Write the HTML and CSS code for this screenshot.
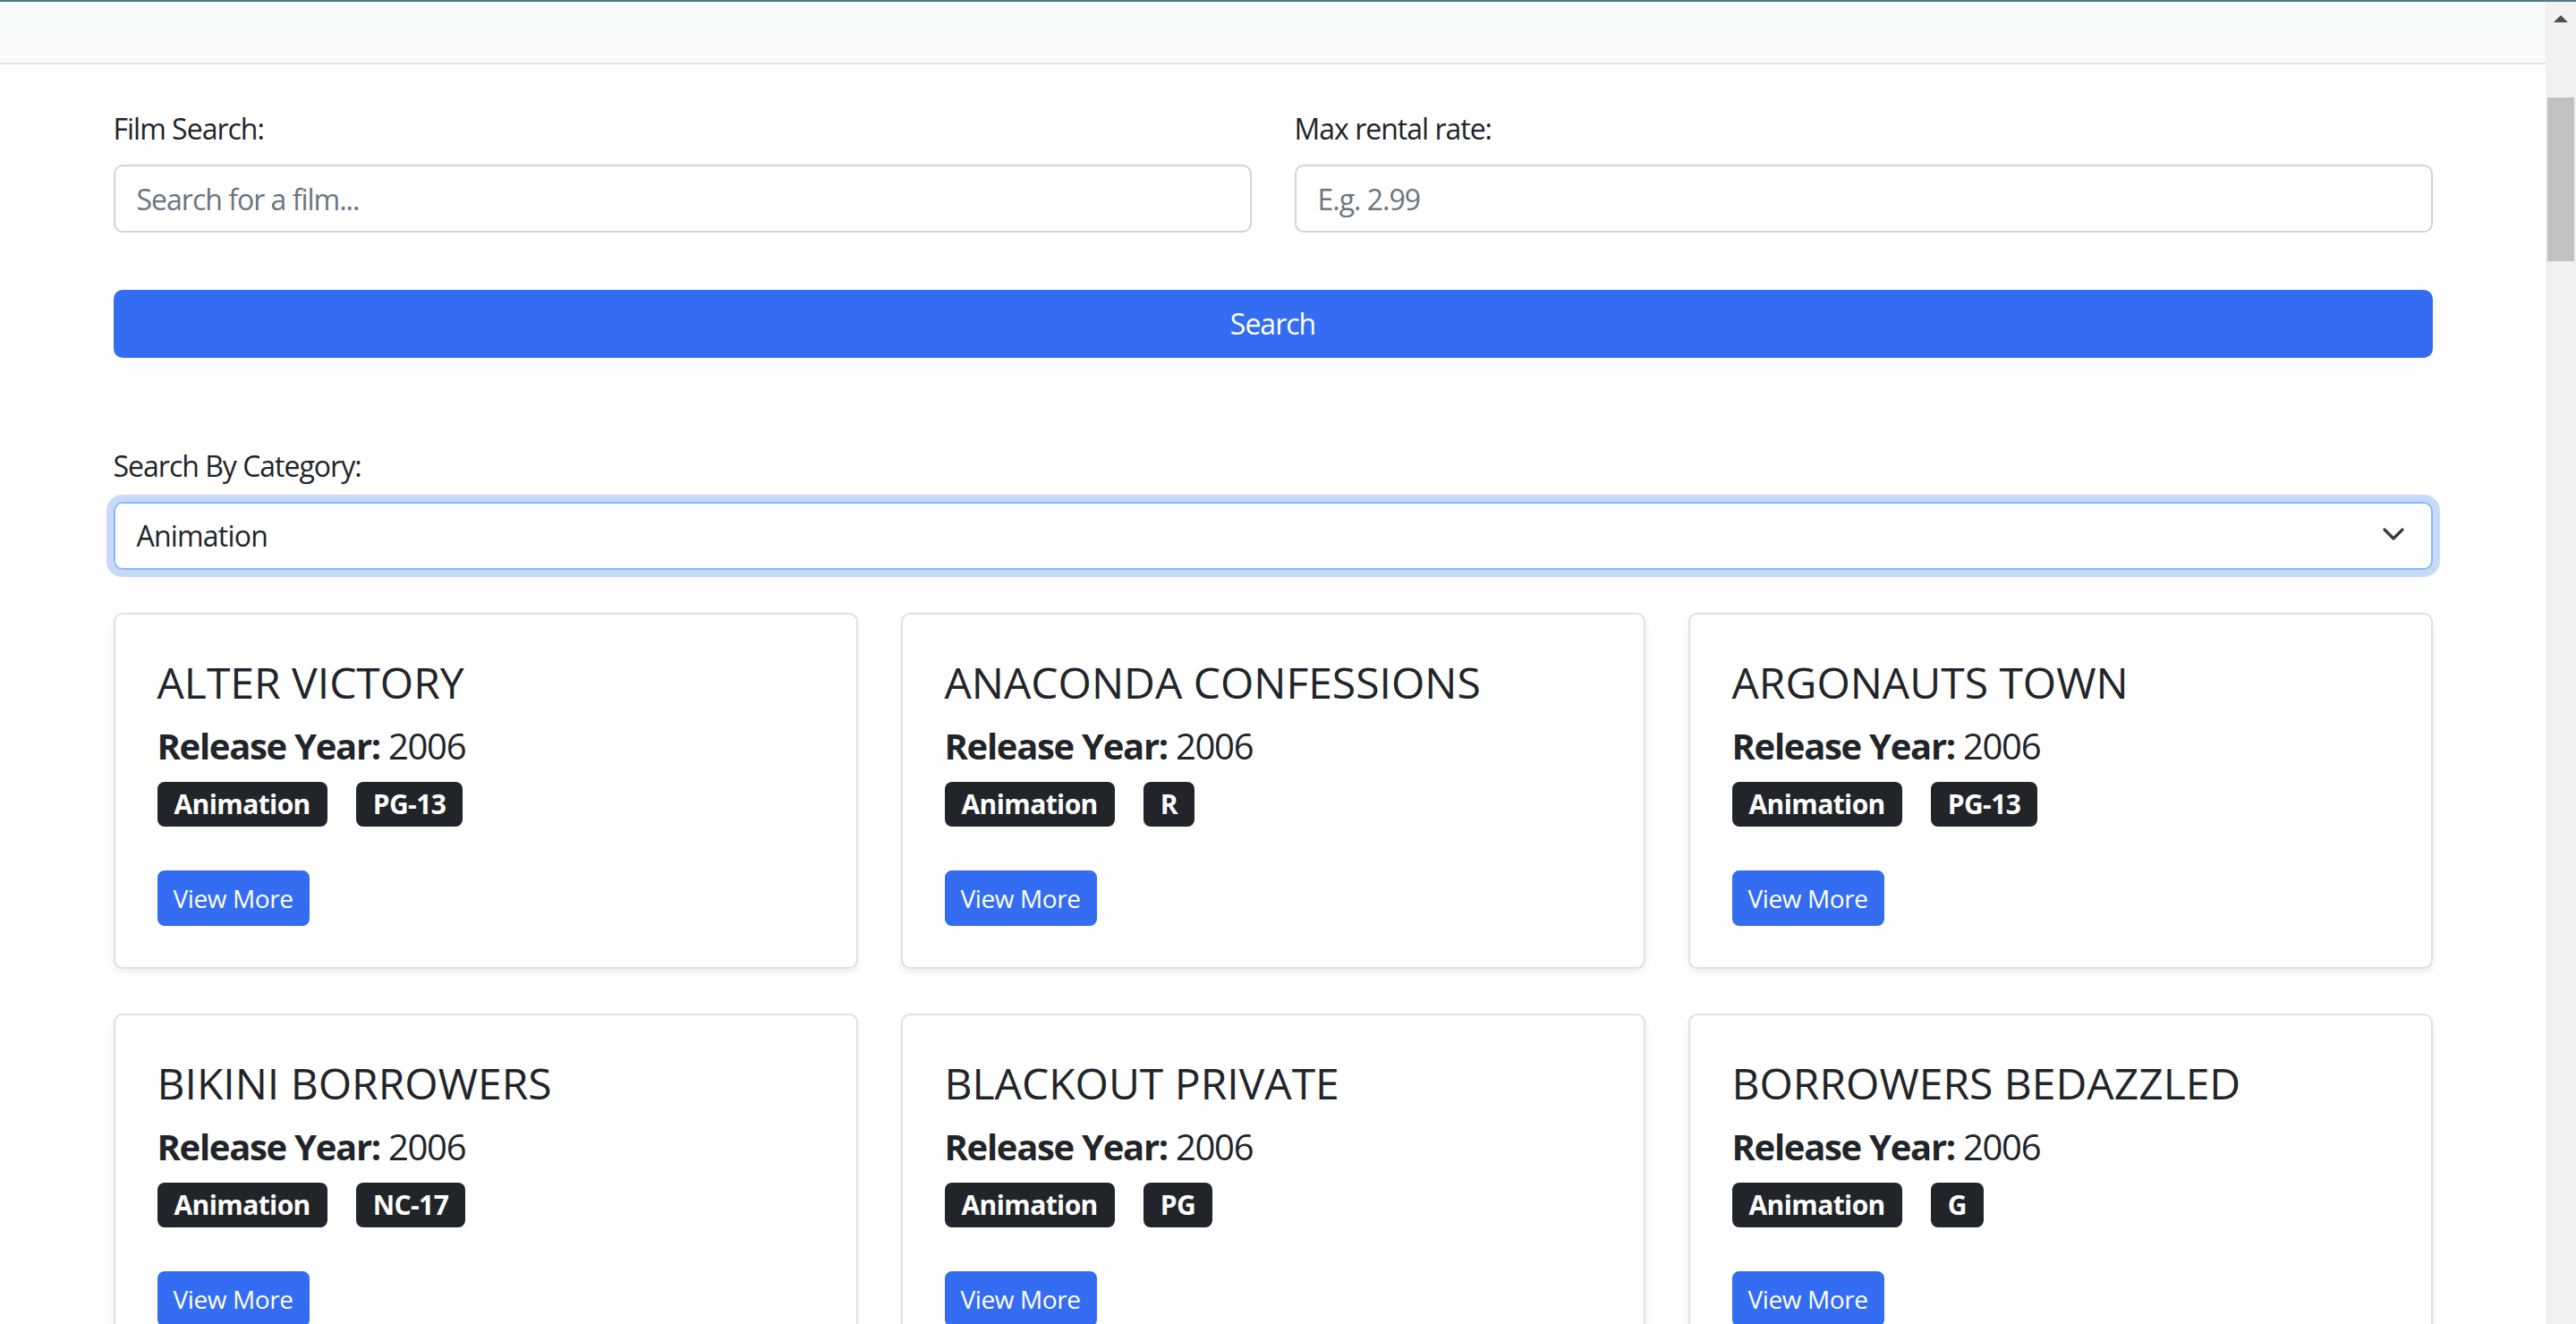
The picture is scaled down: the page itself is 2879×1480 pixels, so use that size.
FILE: index.html
```html
<!DOCTYPE html>
<html lang="en">
<head>
<meta charset="utf-8">
<title>Film Search</title>
<link rel="stylesheet" href="styles.css">
</head>
<body>
<div class="window-line"></div>
<div class="frame">
  <div class="page">
    <nav class="navbar"></nav>
    <main class="container">
      <div class="form-row">
        <div class="field">
          <label class="form-label" for="film">Film Search:</label>
          <input class="form-control" id="film" type="text" placeholder="Search for a film...">
        </div>
        <div class="field">
          <label class="form-label" for="rate">Max rental rate:</label>
          <input class="form-control" id="rate" type="text" placeholder="E.g. 2.99">
        </div>
      </div>
      <button class="btn btn-primary btn-block" type="button">Search</button>

      <div class="category">
        <div class="form-label">Search By Category:</div>
        <div class="form-select">
          <span>Animation</span>
          <svg class="chevron" width="24" height="14" viewBox="0 0 24 14"><polyline points="2,2 12,12 22,2" fill="none" stroke="#343a40" stroke-width="3.2" stroke-linecap="round" stroke-linejoin="round"/></svg>
        </div>
      </div>

      <div class="cards">
        <div class="card">
          <h4 class="card-title">ALTER VICTORY</h4>
          <h5 class="card-year"><strong>Release Year:</strong> 2006</h5>
          <div class="badges"><span class="badge">Animation</span><span class="badge">PG-13</span></div>
          <a class="btn btn-primary btn-sm">View More</a>
        </div>
        <div class="card">
          <h4 class="card-title">ANACONDA CONFESSIONS</h4>
          <h5 class="card-year"><strong>Release Year:</strong> 2006</h5>
          <div class="badges"><span class="badge">Animation</span><span class="badge">R</span></div>
          <a class="btn btn-primary btn-sm">View More</a>
        </div>
        <div class="card">
          <h4 class="card-title">ARGONAUTS TOWN</h4>
          <h5 class="card-year"><strong>Release Year:</strong> 2006</h5>
          <div class="badges"><span class="badge">Animation</span><span class="badge">PG-13</span></div>
          <a class="btn btn-primary btn-sm">View More</a>
        </div>
        <div class="card">
          <h4 class="card-title">BIKINI BORROWERS</h4>
          <h5 class="card-year"><strong>Release Year:</strong> 2006</h5>
          <div class="badges"><span class="badge">Animation</span><span class="badge">NC-17</span></div>
          <a class="btn btn-primary btn-sm">View More</a>
        </div>
        <div class="card">
          <h4 class="card-title">BLACKOUT PRIVATE</h4>
          <h5 class="card-year"><strong>Release Year:</strong> 2006</h5>
          <div class="badges"><span class="badge">Animation</span><span class="badge">PG</span></div>
          <a class="btn btn-primary btn-sm">View More</a>
        </div>
        <div class="card">
          <h4 class="card-title">BORROWERS BEDAZZLED</h4>
          <h5 class="card-year"><strong>Release Year:</strong> 2006</h5>
          <div class="badges"><span class="badge">Animation</span><span class="badge">G</span></div>
          <a class="btn btn-primary btn-sm">View More</a>
        </div>
      </div>
    </main>
  </div>
  <div class="scrollbar">
    <div class="arrow-up"></div>
    <div class="thumb"></div>
  </div>
</div>
</body>
</html>
```
FILE: styles.css
```css
* { box-sizing: border-box; }
html, body {
  margin: 0;
  height: 1480px;
  overflow: hidden;
}
body {
  font-family: "Open Sans", "Noto Sans", "Liberation Sans", sans-serif;
  font-size: 32px;
  line-height: 1.5;
  letter-spacing: -1px;
  color: #212529;
  background: #fff;
}
.window-line {
  height: 2px;
  background: #4b7b84;
}
.frame {
  display: flex;
  height: 1478px;
}
.page {
  flex: 1;
  min-width: 0;
  overflow: hidden;
}
.navbar {
  height: 70px;
  background: #f8f9fa;
  border-bottom: 2px solid #dee2e6;
}
.container {
  width: 2640px;
  margin: 0 auto;
  padding: 48px 24px 0;
}
.form-row {
  display: grid;
  grid-template-columns: 1fr 1fr;
  column-gap: 48px;
}
.form-label {
  display: block;
  margin-bottom: 16px;
  line-height: 48px;
}
.form-control {
  display: block;
  width: 100%;
  height: 76px;
  padding: 12px 24px;
  font: inherit;
  letter-spacing: -1px;
  color: #212529;
  border: 2px solid #ced4da;
  border-radius: 10px;
  background: #fff;
  outline: none;
}
.form-control::placeholder { color: #6c757d; }
.btn {
  display: inline-block;
  font-family: inherit;
  color: #fff;
  background: #346df2;
  border: 2px solid #346df2;
  text-align: center;
  text-decoration: none;
}
.btn-block {
  display: block;
  width: 100%;
  height: 76px;
  margin-top: 64px;
  font-size: 32px;
  line-height: 48px;
  letter-spacing: -1px;
  padding: 12px 24px;
  border-radius: 10px;
}
.category {
  margin-top: 97px;
}
.form-select {
  display: flex;
  align-items: center;
  justify-content: space-between;
  height: 76px;
  padding: 0 30px 0 24px;
  border: 2px solid #86b7fe;
  border-radius: 10px;
  box-shadow: 0 0 0 8px #c9d9fc;
  letter-spacing: -0.8px;
}
.chevron { display: block; margin-top: -4px; }
.cards {
  margin-top: 48px;
  display: grid;
  grid-template-columns: repeat(3, 1fr);
  column-gap: 48px;
  row-gap: 50px;
}
.card {
  height: 398px;
  padding: 47px 47px;
  border: 2px solid #e0e0e0;
  border-radius: 10px;
  box-shadow: 0 4px 8px rgba(0,0,0,.07);
  background: #fff;
}
.card-title {
  margin: 0 0 18px;
  font-size: 48px;
  font-weight: 500;
  line-height: 1.2;
  letter-spacing: 0;
}
.card-year {
  margin: 0 0 16px;
  font-size: 40px;
  font-weight: 400;
  line-height: 48px;
  letter-spacing: -1.3px;
}
.card-year strong { font-weight: 700; }
.badges {
  display: flex;
  gap: 32px;
  margin-bottom: 49px;
}
.badge {
  display: inline-block;
  padding: 10px 19px;
  font-size: 30px;
  font-weight: 700;
  line-height: 30px;
  letter-spacing: -0.6px;
  color: #fff;
  background: #212529;
  border-radius: 8px;
}
.btn-sm {
  font-size: 28px;
  line-height: 42px;
  letter-spacing: -0.4px;
  padding: 8px 16px;
  border-radius: 8px;
}
.scrollbar {
  width: 34px;
  background: #f1f1f1;
  padding: 0 2px;
}
.arrow-up {
  width: 0;
  height: 0;
  margin: 15px auto 0;
  border-left: 8px solid transparent;
  border-right: 8px solid transparent;
  border-bottom: 8px solid #505050;
}
.thumb {
  margin-top: 84px;
  height: 183px;
  background: #c1c1c1;
}
```
